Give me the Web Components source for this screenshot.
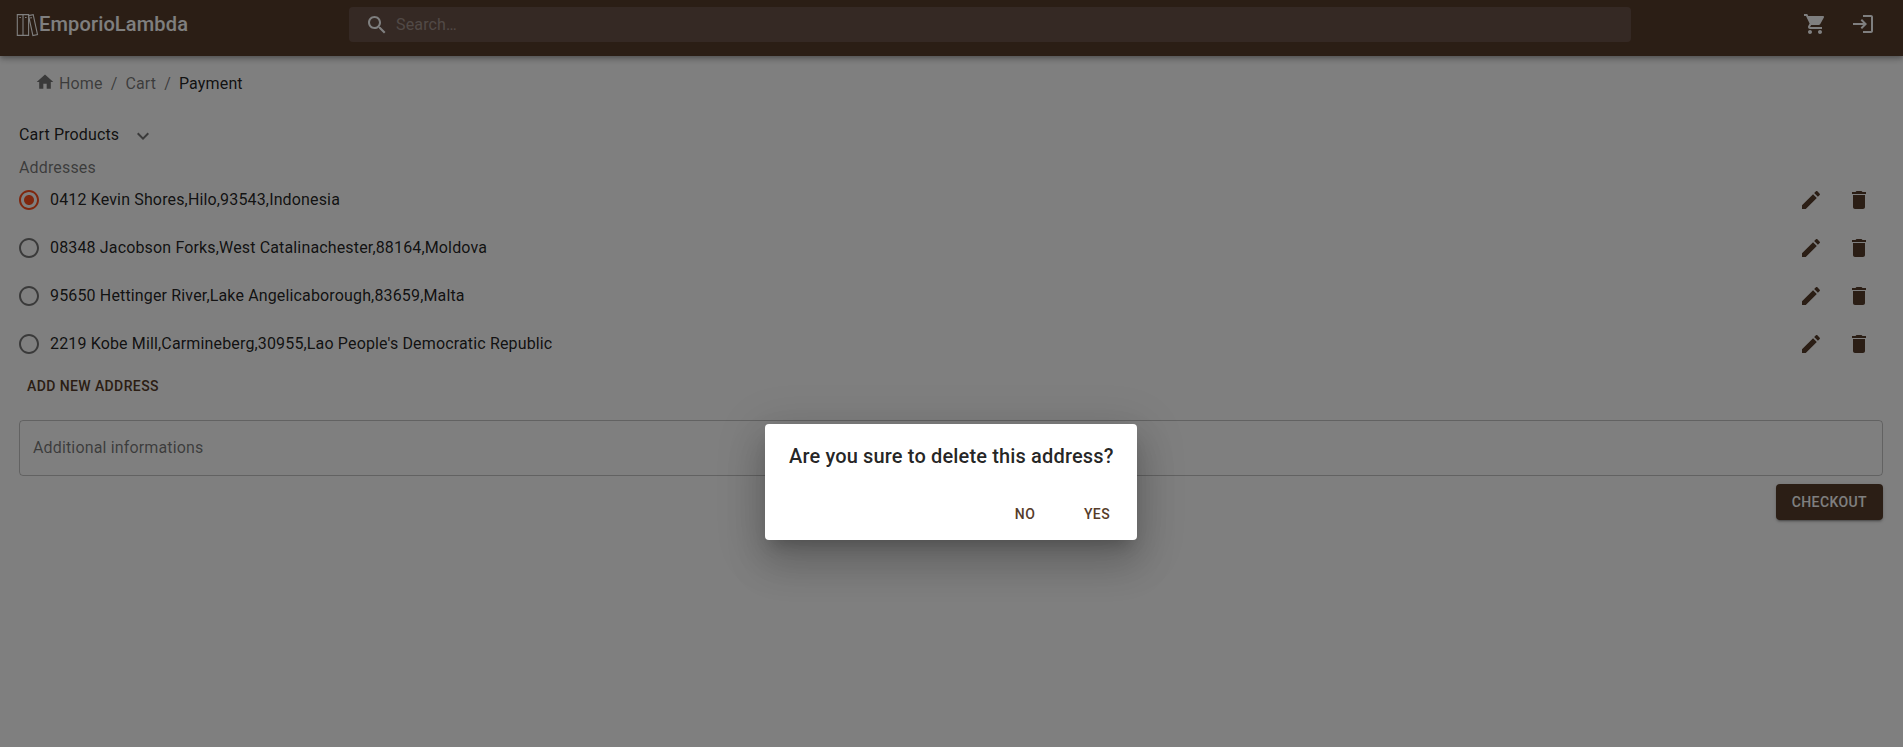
<!DOCTYPE html>
<html lang="en">
<head>
<meta charset="utf-8">
<title>EmporioLambda</title>
<style>
html,body{margin:0;height:100%;overflow:hidden;background:#fff}
body{font-family:Roboto,"Liberation Sans",sans-serif;font-size:16px;line-height:24px;letter-spacing:.15008px;color:rgba(0,0,0,.87);--brown:#563c2a}
</style>
</head>
<body>
<shop-page></shop-page>
<script>
const ICONS = {
  search:'M15.5 14h-.79l-.28-.27C15.41 12.59 16 11.11 16 9.5 16 5.91 13.09 3 9.5 3S3 5.91 3 9.5 5.91 16 9.5 16c1.61 0 3.09-.59 4.23-1.57l.27.28v.79l5 4.99L20.49 19l-4.99-5zm-6 0C7.01 14 5 11.99 5 9.5S7.01 5 9.5 5 14 7.01 14 9.5 11.99 14 9.5 14z',
  cart:'M7 18c-1.1 0-1.99.9-1.99 2S5.900 22 7 22s2-.9 2-2-.9-2-2-2zM1 2v2h2l3.600 7.590-1.350 2.450c-.16.280-.25.610-.25.960 0 1.100.9 2 2 2h12v-2H7.420c-.14 0-.25-.11-.25-.25l.03-.12.900-1.630h7.450c.75 0 1.410-.41 1.750-1.030l3.580-6.490c.08-.14.120-.31.120-.48 0-.55-.45-1-1-1H5.210l-.94-2H1zm16 16c-1.100 0-1.990.900-1.990 2s.89 2 1.990 2 2-.9 2-2-.9-2-2-2z',
  login:'M11 7 9.600 8.400l2.600 2.600H2v2h10.200l-2.600 2.600L11 17l5-5-5-5zM20 19h-8v2h8c1.100 0 2-.9 2-2V5c0-1.100-.9-2-2-2h-8v2h8v14z',
  home:'M10 20v-6h4v6h5v-8h3L12 3 2 12h3v8z',
  down:'M16.590 8.590 12 13.170 7.410 8.590 6 10l6 6 6-6z',
  edit:'M3 17.250V21h3.750L17.810 9.940l-3.750-3.750L3 17.250zM20.710 7.040c.39-.39.39-1.020 0-1.410l-2.340-2.340c-.39-.39-1.020-.39-1.410 0l-1.830 1.830 3.750 3.750 1.830-1.830z',
  trash:'M6 19c0 1.100.9 2 2 2h8c1.100 0 2-.9 2-2V7H6v12zM19 4h-3.500l-1-1h-5l-1 1H5v2h14V4z',
  ring:'M12 2C6.480 2 2 6.480 2 12s4.480 10 10 10 10-4.480 10-10S17.520 2 12 2zm0 18c-4.420 0-8-3.580-8-8s3.580-8 8-8 8 3.580 8 8-3.580 8-8 8z',
  dot:'M12 7c-2.760 0-5 2.240-5 5s2.240 5 5 5 5-2.240 5-5-2.240-5-5-5z'
};
function define(name, render){
  customElements.define(name, class extends HTMLElement{
    connectedCallback(){
      if(!this.shadowRoot) this.attachShadow({mode:'open'}).innerHTML = render(this);
    }
  });
}
define('svg-icon', el => `<style>:host{display:block;flex:none;width:24px;height:24px}svg{display:block;width:100%;height:100%;fill:currentColor}</style>
<svg viewBox="0 0 24 24">${el.getAttribute('name').split(' ').map(n=>`<path d="${ICONS[n]}"/>`).join('')}</svg>`);

define('brand-logo', () => `<style>:host{display:flex;align-items:center;font-size:20px;font-weight:500;line-height:32px;letter-spacing:.15px;color:#fff}svg{display:block;width:24px;height:24px;margin-top:2px}</style>
<svg viewBox="0 0 24 24" fill="none" stroke="currentColor" stroke-width="1.100"><path d="M2.300 1.600H8v20.800H2.300zM8 1.600h5.600v20.800H8zM13.600 2.600l4.600-1 4.300 20-4.600.9-4.300-19.900zM4.300 4.500h1.600M10 4.500h1.600M15.200 5l1.600-.4"/></svg><span><slot></slot></span>`);

define('search-field', () => `<style>:host{display:flex;align-items:center;box-sizing:border-box;height:35px;border-radius:4px;background:#6b5349;color:#fff;padding-left:16px}
span{margin-left:7px;color:#a3948d}</style><svg-icon name="search"></svg-icon><span><slot></slot></span>`);

define('app-header', () => `<style>:host{display:grid;grid-template-columns:349px 1282px 1fr;align-items:center;box-sizing:border-box;height:56px;padding-bottom:8px;background:var(--brown);color:#fff;box-shadow:0 2px 4px -1px rgba(0,0,0,.2),0 4px 5px rgba(0,0,0,.14),0 1px 10px rgba(0,0,0,.12)}
brand-logo{margin-left:15px}nav{display:flex;gap:24px;justify-content:flex-end;padding-right:28px}search-field{margin-top:1px}</style>
<brand-logo>EmporioLambda</brand-logo><search-field>Search…</search-field><nav><svg-icon name="cart"></svg-icon><svg-icon name="login"></svg-icon></nav>`);

define('bread-crumbs', () => `<style>:host{display:flex;align-items:center;margin:16px 0 0 35px;color:rgba(0,0,0,.54)}
i{font-style:normal;margin:0 8px}svg-icon{width:20px;height:20px;margin-right:4px;margin-top:-4px}b{font-weight:400;color:rgba(0,0,0,.87)}</style>
<svg-icon name="home"></svg-icon><span>Home</span><i>/</i><span>Cart</span><i>/</i><b>Payment</b>`);

define('address-row', el => { const on = el.hasAttribute('checked'); return `<style>:host{display:flex;align-items:center;height:48px}
.r{color:${on?'#ff4e1c':'rgba(0,0,0,.54)'};margin-left:-2px;margin-right:9px}.t{flex:1}nav{display:flex;gap:24px;color:var(--brown);margin-right:12px}</style>
<svg-icon class="r" name="${on?'ring dot':'ring'}"></svg-icon><span class="t"><slot></slot></span><nav><svg-icon name="edit"></svg-icon><svg-icon name="trash"></svg-icon></nav>`});

define('mui-button', el => `<style>:host{display:block;box-sizing:border-box;min-width:64px;padding:6px 8px;border-radius:4px;text-align:center;font-size:14px;font-weight:500;line-height:24.5px;letter-spacing:.4px;color:var(--brown);text-transform:uppercase}
:host([contained]){padding:6px 16px;height:36px;background:var(--brown);color:#fff;box-shadow:0 3px 1px -2px rgba(0,0,0,.2),0 2px 2px rgba(0,0,0,.14),0 1px 5px rgba(0,0,0,.12)}</style><slot></slot>`);

define('note-field', () => `<style>:host{display:flex;align-items:center;box-sizing:border-box;height:56px;border:1px solid rgba(0,0,0,.23);border-radius:4px;padding:0 13px;color:rgba(0,0,0,.54)}</style><slot></slot>`);

define('confirm-dialog', () => `<style>:host{position:absolute;inset:0;display:flex;align-items:center;justify-content:center;background:rgba(0,0,0,.5)}
section{width:372px;height:116px;box-sizing:border-box;margin-top:217px;margin-right:1px;background:#fff;border-radius:4px;box-shadow:0 11px 15px -7px rgba(0,0,0,.2),0 24px 38px 3px rgba(0,0,0,.14),0 9px 46px 8px rgba(0,0,0,.12)}
h2{margin:0;padding:16px 24px;font-size:20px;font-weight:500;line-height:32px;letter-spacing:.15px;white-space:nowrap}
div{display:flex;justify-content:flex-end;gap:8px;padding:8px}</style>
<section><h2><slot></slot></h2><div><mui-button>No</mui-button><mui-button>Yes</mui-button></div></section>`);

define('shop-page', () => `<style>:host{display:block;position:relative;height:100%}
main{padding:0 20px 0 19px}.products{display:flex;align-items:center;gap:12px;margin-top:26px}.products svg-icon{color:rgba(0,0,0,.54);margin-top:2px}
.label{color:rgba(0,0,0,.54);margin-top:8px;line-height:23px;height:9px}.list{margin-top:11px}.add{display:flex;height:36px}note-field{margin-top:16px}.foot{display:flex;justify-content:flex-end;margin-top:8px}</style>
<app-header></app-header><bread-crumbs></bread-crumbs>
<main><div class="products"><span>Cart Products</span><svg-icon name="down"></svg-icon></div>
<div class="label">Addresses</div>
<div class="list"><address-row checked>0412 Kevin Shores,Hilo,93543,Indonesia</address-row>
<address-row>08348 Jacobson Forks,West Catalinachester,88164,Moldova</address-row>
<address-row>95650 Hettinger River,Lake Angelicaborough,83659,Malta</address-row>
<address-row>2219 Kobe Mill,Carmineberg,30955,Lao People's Democratic Republic</address-row></div>
<div class="add"><mui-button>Add new address</mui-button></div>
<note-field>Additional informations</note-field>
<div class="foot"><mui-button contained>Checkout</mui-button></div></main>
<confirm-dialog>Are you sure to delete this address?</confirm-dialog>`);
</script>
</body>
</html>
